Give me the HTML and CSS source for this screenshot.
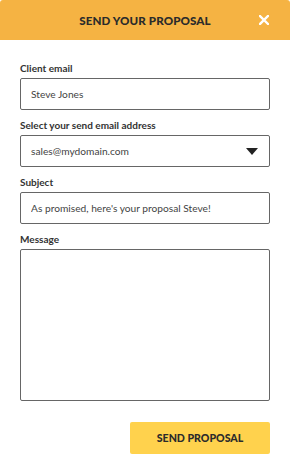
FILE: index.html
```html
<!DOCTYPE html>
<html lang="en">
<head>
    <meta charset="UTF-8">
    <meta name="viewport" content="width=device-width, initial-scale=1.0">
    <title>Send your proposal</title>
    <link rel="stylesheet" href="styles.css">
</head>
<body>
    <div class="dialog">
        <div class="dialog-header">
            <h1>SEND YOUR PROPOSAL</h1>
            <span class="close">
                <svg width="10" height="10" viewBox="0 0 10 10">
                    <path d="M1 1 L9 9 M9 1 L1 9" stroke="#fff" stroke-width="2.4" stroke-linecap="square"/>
                </svg>
            </span>
        </div>

        <form class="dialog-body">
            <div class="field">
                <label for="client">Client email</label>
                <input type="text" id="client" value="Steve Jones">
            </div>

            <div class="field">
                <label for="sender">Select your send email address</label>
                <div class="select-box">
                    <span>sales@mydomain.com</span>
                    <span class="caret"></span>
                </div>
            </div>

            <div class="field">
                <label for="subject">Subject</label>
                <input type="text" id="subject" value="As promised, here's your proposal Steve!">
            </div>

            <div class="field">
                <label for="message">Message</label>
                <textarea id="message"></textarea>
            </div>

            <div class="actions">
                <button type="button">SEND PROPOSAL</button>
            </div>
        </form>
    </div>
</body>
</html>
```

FILE: styles.css
```css
body {
    margin: 0;
    font-family: Lato, "Open Sans", sans-serif;
    background-color: #fff;
    color: #333;
}
.dialog {
    width: 290px;
}
.dialog-header {
    position: relative;
    height: 40px;
    background-color: #f5b343;
    border-radius: 3px 3px 0 0;
    display: flex;
    align-items: center;
    justify-content: center;
}
.dialog-header h1 {
    margin: 0;
    font-size: 11.6px;
    font-weight: 900;
    color: #2b2b2b;
    letter-spacing: 0.1px;
}
/* close button sits over the header */
.close {
    position: absolute;
    right: 21px;
    top: 15px;
    width: 10px;
    height: 10px;
    line-height: 0;
}
.dialog-body {
    padding: 22px 20px 0 20px;
}
.field {
    margin-bottom: 9px;
}
.field label {
    display: block;
    font-size: 10px;
    line-height: 12px;
    font-weight: 700;
    color: #333;
    margin-bottom: 4px;
}
.field input,
.select-box {
    box-sizing: border-box;
    width: 250px;
    height: 32px;
    border: 1px solid #666;
    border-radius: 2px;
    padding: 0 10px;
    font-family: Lato, "Open Sans", sans-serif;
    font-size: 10.2px;
    color: #444;
    background: #fff;
    outline: none;
}
.select-box {
    display: flex;
    align-items: center;
    justify-content: space-between;
}
.caret {
    width: 0;
    height: 0;
    margin-right: 1px;
    border-left: 6px solid transparent;
    border-right: 6px solid transparent;
    border-top: 7px solid #222;
}
.field textarea {
    box-sizing: border-box;
    display: block;
    width: 250px;
    height: 152px;
    border: 1px solid #666;
    border-radius: 2px;
    resize: none;
    outline: none;
}
.actions {
    display: flex;
    justify-content: flex-end;
    padding-top: 12px;
}
.actions button {
    width: 140px;
    height: 32px;
    border: none;
    border-radius: 2px;
    background-color: #ffd24d;
    font-family: Lato, "Open Sans", sans-serif;
    font-size: 10.6px;
    font-weight: 900;
    color: #2b2b2b;
    cursor: pointer;
}
```
